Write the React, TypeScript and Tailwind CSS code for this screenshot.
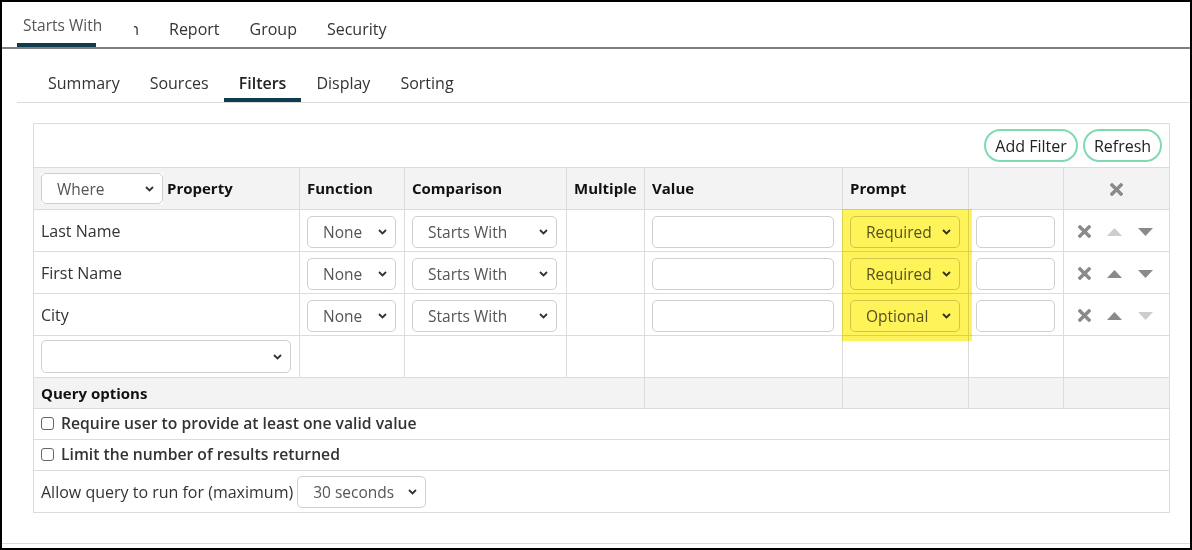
import React from "react";

type Row = { name: string; prompt: string; up: boolean; down: boolean };

const rows: Row[] = [
  { name: "Last Name", prompt: "Required", up: false, down: true },
  { name: "First Name", prompt: "Required", up: true, down: true },
  { name: "City", prompt: "Optional", up: true, down: false },
];

const Chevron = () => (
  <svg
    width="9"
    height="6"
    viewBox="0 0 9 6"
    className="pointer-events-none absolute right-[9px] top-1/2 -translate-y-1/2"
  >
    <path d="M1 1l3.5 3.5L8 1" fill="none" stroke="#333" strokeWidth="1.8" />
  </svg>
);

const Select = ({ value, className }: { value: string; className: string }) => (
  <div className={"relative " + className}>
    <select className="h-full w-full appearance-none rounded-[5px] border border-[#cfcfcf] bg-transparent pl-[15px] pt-[2px] text-[15.5px] font-normal text-[#555] outline-none">
      <option>{value}</option>
    </select>
    <Chevron />
  </div>
);

const Times = ({ color = "#8a8a8a" }: { color?: string }) => (
  <svg width="13" height="13" viewBox="0 0 13 13">
    <path d="M2 2l9 9M11 2l-9 9" stroke={color} strokeWidth="3.4" strokeLinecap="square" />
  </svg>
);

const Tri = ({ dir, on }: { dir: "up" | "down"; on: boolean }) => (
  <svg width="15" height="8" viewBox="0 0 15 8">
    <path d={dir === "up" ? "M0 8L7.5 0L15 8Z" : "M0 0L15 0L7.5 8Z"} fill={on ? "#8a8a8a" : "#cdcdcd"} />
  </svg>
);

const cell = "border border-[#dcdcdc] px-[7px]";

export default function App() {
  return (
    <div className="h-[550px] w-[1192px] overflow-hidden border-2 border-black bg-white font-['Open_Sans',sans-serif] text-[#333]">
      {/* top tabs */}
      <div className="flex h-[47px] items-start border-b-2 border-[#808080] pl-[15px]">
        <div className="flex h-full w-[79px] flex-col justify-between">
          <span className="whitespace-nowrap pl-[6px] pt-[13px] text-[15.5px] leading-[20px] text-[#555]">Starts With</span>
          <div className="h-[4px] bg-[#0e3c4c]" />
        </div>
        <div className="flex w-[58px] justify-end pr-[15px] pt-[16px]">
          <div className="flex w-[5px] justify-end overflow-hidden text-[16px] leading-[22px]">
            <span>n</span>
          </div>
        </div>
        {["Report", "Group", "Security"].map((t) => (
          <span key={t} className="px-[15px] pt-[16px] text-[16px] leading-[22px]">
            {t}
          </span>
        ))}
      </div>

      {/* panel */}
      <div className="h-[495px] border-b border-[#dcdcdc]">
        <div className="ml-[15px] flex h-[54px] items-end border-b border-[#dcdcdc] pl-[16px]">
          {["Summary", "Sources", "Filters", "Display", "Sorting"].map((t) => (
            <div
              key={t}
              className={
                t === "Filters"
                  ? "border-b-4 border-[#0e3c4c] px-[15px] pb-[4px] text-[16px] font-semibold leading-[22px] text-[#222]"
                  : "border-b-4 border-transparent px-[15px] pb-[4px] text-[16px] leading-[22px]"
              }
            >
              {t}
            </div>
          ))}
        </div>

        <div className="relative ml-[31px] mr-[21px] mt-[20px]">
          <table className="w-full table-fixed border-collapse text-[16px]">
            <colgroup>
              <col className="w-[266px]" />
              <col className="w-[105px]" />
              <col className="w-[162px]" />
              <col className="w-[78px]" />
              <col className="w-[198px]" />
              <col className="w-[126px]" />
              <col className="w-[95px]" />
              <col className="w-[106px]" />
            </colgroup>
            <tbody>
              <tr>
                <td colSpan={8} className="h-[44px] border border-[#dcdcdc] pr-[7px]">
                  <div className="flex justify-end gap-[5px]">
                    <button className="h-[33px] w-[94px] rounded-full border-2 border-[#82d9b1] text-[16px] text-[#222]">
                      Add Filter
                    </button>
                    <button className="h-[33px] w-[79px] rounded-full border-2 border-[#82d9b1] text-[16px] text-[#222]">
                      Refresh
                    </button>
                  </div>
                </td>
              </tr>
              <tr className="bg-[#f3f3f3] text-[15px] font-bold text-[#111]">
                <td className={cell + " h-[42px]"}>
                  <div className="flex items-center gap-[4px]">
                    <Select value="Where" className="h-[31px] w-[122px] bg-white" />
                    <span>Property</span>
                  </div>
                </td>
                <td className={cell}>Function</td>
                <td className={cell}>Comparison</td>
                <td className={cell}>Multiple</td>
                <td className={cell}>Value</td>
                <td className={cell}>Prompt</td>
                <td className={cell}></td>
                <td className={cell}>
                  <div className="flex justify-center pt-[2px]">
                    <Times />
                  </div>
                </td>
              </tr>
              {rows.map((r) => (
                <tr key={r.name}>
                  <td className={cell + " h-[42px]"}>{r.name}</td>
                  <td className={cell}>
                    <Select value="None" className="mt-[2px] h-[32px] w-[89px]" />
                  </td>
                  <td className={cell}>
                    <Select value="Starts With" className="mt-[2px] h-[32px] w-[145px]" />
                  </td>
                  <td className={cell}></td>
                  <td className={cell}>
                    <input className="mt-[2px] h-[32px] w-[182px] rounded-[5px] border border-[#cfcfcf] outline-none" />
                  </td>
                  <td className={cell}>
                    <Select value={r.prompt} className="mt-[2px] h-[32px] w-[110px]" />
                  </td>
                  <td className={cell}>
                    <input className="mt-[2px] h-[32px] w-[79px] rounded-[5px] border border-[#cfcfcf] outline-none" />
                  </td>
                  <td className={cell}>
                    <div className="flex items-center gap-[16px] pl-[7px] pt-[2px]">
                      <Times />
                      <Tri dir="up" on={r.up} />
                      <Tri dir="down" on={r.down} />
                    </div>
                  </td>
                </tr>
              ))}
              <tr>
                <td className={cell + " h-[42px]"}>
                  <Select value="" className="h-[33px] w-[250px]" />
                </td>
                <td className={cell}></td>
                <td className={cell}></td>
                <td className={cell}></td>
                <td className={cell}></td>
                <td className={cell}></td>
                <td className={cell}></td>
                <td className={cell}></td>
              </tr>
              <tr className="bg-[#f3f3f3]">
                <td colSpan={4} className={cell + " h-[31px] text-[15px] font-bold text-[#111]"}>
                  Query options
                </td>
                <td className={cell}></td>
                <td className={cell}></td>
                <td className={cell}></td>
                <td className={cell}></td>
              </tr>
              {["Require user to provide at least one valid value", "Limit the number of results returned"].map((t) => (
                <tr key={t}>
                  <td colSpan={8} className={cell + " h-[31px]"}>
                    <label className="flex items-center gap-[7px] text-[15.7px] font-semibold text-[#333]">
                      <input
                        type="checkbox"
                        className="h-[13px] w-[13px] appearance-none rounded-[3px] border border-[#666] bg-white"
                      />
                      {t}
                    </label>
                  </td>
                </tr>
              ))}
              <tr>
                <td colSpan={8} className={cell + " h-[42px]"}>
                  <div className="flex items-center gap-[4px]">
                    <span>Allow query to run for (maximum)</span>
                    <Select value="30 seconds" className="h-[32px] w-[129px]" />
                  </div>
                </td>
              </tr>
            </tbody>
          </table>
          <div className="pointer-events-none absolute left-[809px] top-[86px] h-[132px] w-[130px] bg-[#fff35a] mix-blend-multiply" />
        </div>
      </div>
    </div>
  );
}
